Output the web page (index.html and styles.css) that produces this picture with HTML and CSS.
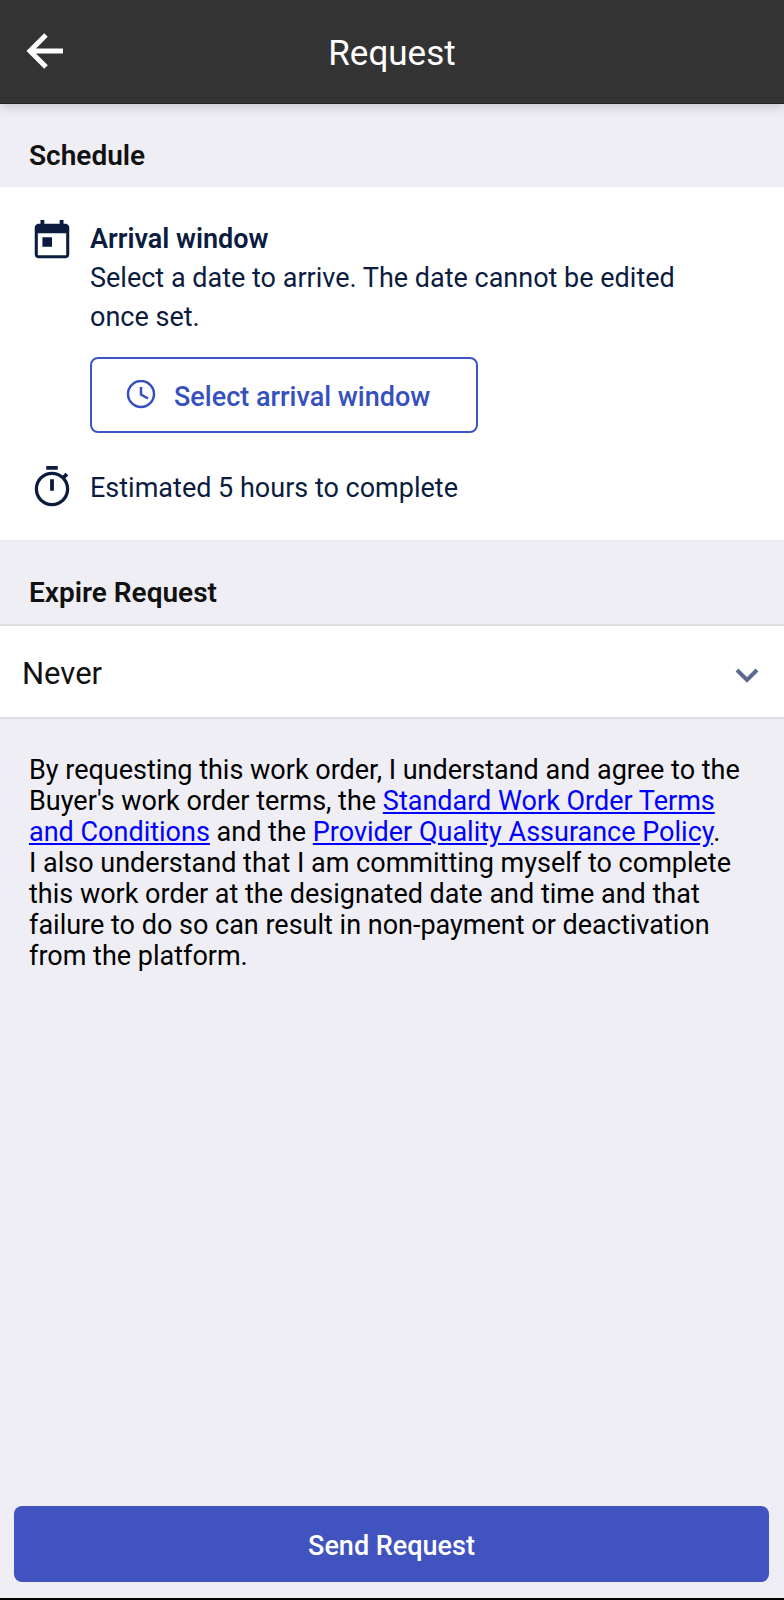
FILE: index.html
```html
<!DOCTYPE html>
<html lang="en">
<head>
    <meta charset="UTF-8">
    <meta name="viewport" content="width=device-width, initial-scale=1.0">
    <title>Request</title>
    <link rel="stylesheet" href="styles.css">
</head>
<body>
    <header class="topbar">
        <button class="back" type="button" aria-label="Back">
            <svg width="38" height="38" viewBox="0 0 38 38" fill="none" stroke="#fff" stroke-width="5">
                <path d="M37 18H4M20 2L4 18l16 16"/>
            </svg>
        </button>
        <h1>Request</h1>
    </header>

    <main>
        <h2 class="section-title">Schedule</h2>
        <section class="card">
            <div class="row">
                <svg class="icon" viewBox="0 0 24 24">
                    <path d="M19 3h-1V1h-2v2H8V1H6v2H5c-1.100 0-2 .9-2 2v14c0 1.100.9 2 2 2h14c1.100 0 2-.9 2-2V5c0-1.100-.9-2-2-2zm.4 16.400H4.600V8h14.800zM7 10h5v5H7z"/>
                </svg>
                <div class="details">
                    <h3>Arrival window</h3>
                    <p>Select a date to arrive. The date cannot be edited once set.</p>
                    <button class="outline-button" type="button">
                        <svg width="30" height="30" viewBox="0 0 30 30" fill="none" stroke="#3650c0" stroke-width="2.500">
                            <circle cx="15" cy="14" r="13"/>
                            <path d="M15 7v7.500l7 4"/>
                        </svg>
                        <span>Select arrival window</span>
                    </button>
                </div>
            </div>
            <div class="row centered">
                <svg class="icon" viewBox="0 0 24 24">
                    <path d="M15 1H9v2h6V1zm-4 13h2V8h-2v6zm8.030-6.610l1.420-1.420c-.43-.51-.9-.99-1.410-1.410l-1.420 1.420C16.070 4.740 14.120 4 12 4c-4.970 0-9 4.030-9 9s4.020 9 9 9 9-4.030 9-9c0-2.120-.74-4.070-1.970-5.610zM12 20.300c-4.030 0-7.300-3.270-7.300-7.300s3.270-7.300 7.300-7.300 7.300 3.270 7.300 7.300-3.270 7.300-7.300 7.300z"/>
                </svg>
                <p>Estimated 5 hours to complete</p>
            </div>
        </section>

        <h2 class="section-title"><label for="expire">Expire Request</label></h2>
        <div class="select-wrap">
            <select id="expire">
                <option>Never</option>
            </select>
            <svg class="chevron" width="24" height="16" viewBox="0 0 24 16" fill="none" stroke="#5d6b8e" stroke-width="4">
                <path d="M2 2l10 10L22 2"/>
            </svg>
        </div>

        <p class="terms">
            By requesting this work order, I understand and agree to the Buyer's work order terms, the
            <a href="#">Standard Work Order Terms and Conditions</a> and the
            <a href="#">Provider Quality Assurance Policy</a>.<br>
            I also understand that I am committing myself to complete this work order at the designated
            date and time and that failure to do so can result in non-payment or deactivation from the platform.
        </p>
    </main>

    <footer>
        <button class="send" type="button">Send Request</button>
    </footer>
</body>
</html>
```

FILE: styles.css
```css
* {
    box-sizing: border-box;
}

body {
    margin: 0;
    min-height: 100vh;
    display: flex;
    flex-direction: column;
    background: #efeef5;
    color: #111;
    font-family: Roboto, sans-serif;
    font-size: 27px;
    line-height: 39px;
}

h1, h2, h3, p {
    margin: 0;
}

button, select {
    font: inherit;
    cursor: pointer;
}

.topbar {
    display: grid;
    grid-template-columns: 64px 1fr 64px;
    align-items: center;
    height: 104px;
    background: #333;
    border-bottom: 1px solid #222;
    box-shadow: 0 2px 12px rgba(0, 0, 0, 0.2);
}

.topbar h1 {
    padding-top: 4px;
    color: #fff;
    font-size: 35px;
    font-weight: 400;
    text-align: center;
}

.back {
    display: flex;
    justify-content: flex-end;
    padding: 0;
    border: 0;
    background: none;
}

main {
    flex: 1;
}

.section-title {
    padding: 32px 29px 12px;
    font-size: 28px;
    font-weight: 600;
}

.card {
    display: flex;
    flex-direction: column;
    gap: 31px;
    padding: 31px 29px 30px;
    background: #fff;
    border-bottom: 1px solid #e8e8ec;
    color: #0b1c3f;
}

.row {
    display: flex;
    gap: 15px;
}

.centered {
    align-items: center;
}

.centered p {
    padding-top: 2px;
}

.icon {
    flex: none;
    width: 46px;
    height: 46px;
    fill: #0b1c3f;
}

.details {
    max-width: 620px;
    padding-top: 2px;
}

.details h3 {
    font-size: 27px;
    font-weight: 600;
}

.outline-button {
    display: flex;
    align-items: center;
    gap: 18px;
    height: 76px;
    margin-top: 20px;
    padding: 0 46px 0 34px;
    background: #fff;
    border: 2px solid #3f54c4;
    border-radius: 8px;
    color: #3650c0;
    font-weight: 500;
}

.outline-button span {
    padding-top: 4px;
}

.select-wrap {
    position: relative;
    border-top: 2px solid #dfdee3;
    border-bottom: 2px solid #dfdee3;
}

.select-wrap select {
    display: block;
    width: 100%;
    height: 91px;
    padding: 4px 64px 0 22px;
    appearance: none;
    background: #fff;
    border: 0;
    border-radius: 0;
    color: #111;
    font-size: 31px;
}

.chevron {
    position: absolute;
    top: 42px;
    right: 25px;
    pointer-events: none;
}

.terms {
    padding: 36px 29px;
    color: #000;
    line-height: 31px;
}

.terms a {
    color: #00f;
}

footer {
    padding: 14px 15px 16px 14px;
    border-bottom: 2px solid #000;
}

.send {
    width: 100%;
    height: 76px;
    padding: 4px 0 0;
    background: #4053bf;
    border: 0;
    border-radius: 8px;
    color: #fff;
    font-weight: 500;
}
```
